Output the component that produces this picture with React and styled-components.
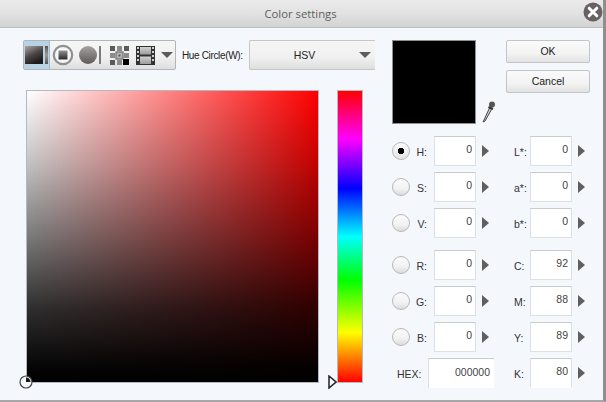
import React from 'react';
import styled, {createGlobalStyle} from 'styled-components';

const GlobalStyle = createGlobalStyle`
	html, body {
		margin: 0;
		padding: 0;
		background: #f4f7fc;
	}
`;

const hsvFields = [
	{label: 'H:', value: '0', checked: true},
	{label: 'S:', value: '0'},
	{label: 'V:', value: '0'},
];
const rgbFields = [
	{label: 'R:', value: '0'},
	{label: 'G:', value: '0'},
	{label: 'B:', value: '0'},
];
const labFields = [
	{label: 'L*:', value: '0'},
	{label: 'a*:', value: '0'},
	{label: 'b*:', value: '0'},
];
const cmyFields = [
	{label: 'C:', value: '92'},
	{label: 'M:', value: '88'},
	{label: 'Y:', value: '89'},
];

const Arrow = () => (
	<svg width='7' height='12' viewBox='0 0 7 12'>
		<path d='M0 0 L7 6 L0 12 Z' fill='#5f5f5f' />
	</svg>
);

const modeButtons = [
	{
		width: 26,
		icon: (
			<svg width='24' height='20' viewBox='0 0 24 20'>
				<defs>
					<linearGradient id='sq' x1='0' y1='0' x2='0.5' y2='1'>
						<stop offset='0' stopColor='#a8a8a8' />
						<stop offset='0.55' stopColor='#4c4745' />
						<stop offset='1' stopColor='#1d1a1a' />
					</linearGradient>
					<linearGradient id='bar' x1='0' y1='0' x2='0' y2='1'>
						<stop offset='0' stopColor='#555' />
						<stop offset='0.5' stopColor='#999' />
						<stop offset='1' stopColor='#555' />
					</linearGradient>
				</defs>
				<rect x='0' y='1' width='18' height='18' fill='url(#sq)' />
				<rect x='20' y='1' width='3' height='18' fill='url(#bar)' />
			</svg>
		),
	},
	{
		width: 26,
		icon: (
			<svg width='22' height='22' viewBox='0 0 22 22'>
				<defs>
					<linearGradient id='inner' x1='0' y1='0' x2='0' y2='1'>
						<stop offset='0' stopColor='#999' />
						<stop offset='1' stopColor='#222' />
					</linearGradient>
				</defs>
				<circle cx='11' cy='11' r='9.2' fill='#f4f4f4' stroke='#8f8f8f' strokeWidth='2.2' />
				<rect x='6' y='6' width='10' height='10' fill='url(#inner)' stroke='#fff' />
			</svg>
		),
	},
	{
		width: 27,
		icon: (
			<svg width='22' height='20' viewBox='0 0 22 20'>
				<defs>
					<linearGradient id='ball' x1='0' y1='0' x2='0' y2='1'>
						<stop offset='0' stopColor='#a5a1a1' />
						<stop offset='1' stopColor='#5e5a5a' />
					</linearGradient>
				</defs>
				<circle cx='9' cy='10' r='9' fill='url(#ball)' />
				<rect x='20' y='1' width='2' height='18' fill='#7c7c7c' />
			</svg>
		),
	},
	{
		width: 32,
		icon: (
			<svg width='19' height='19' viewBox='0 0 19 19'>
				<path d='M0 0h5v5H0zM14 0h5v5h-5zM0 14h5v5H0z' fill='#5a5a5a' />
				<path d='M7 0h5v5H7zM0 7h5v5H0zM14 7h5v5h-5zM7 14h5v5H7z' fill='#8b8b8b' />
				<rect x='6' y='6' width='7' height='7' fill='#b5b5b5' stroke='#7a7a7a' strokeWidth='1.4' />
				<rect x='8.5' y='8.5' width='2' height='2' fill='#555' />
				<rect x='13' y='13' width='6' height='6' fill='#000' />
			</svg>
		),
	},
	{
		width: 20,
		icon: (
			<svg width='19' height='19' viewBox='0 0 19 19'>
				<defs>
					<linearGradient id='frame' x1='0' y1='0' x2='0' y2='1'>
						<stop offset='0' stopColor='#d2d2d2' />
						<stop offset='1' stopColor='#9c9c9c' />
					</linearGradient>
				</defs>
				<rect x='0' y='0' width='19' height='19' fill='#333' />
				<rect x='4' y='1' width='11' height='7.5' fill='url(#frame)' />
				<rect x='4' y='10.5' width='11' height='7.5' fill='url(#frame)' />
				<path d='M1 1h2v2H1zM1 5h2v2H1zM1 9h2v2H1zM1 13h2v2H1zM16 1h2v2h-2zM16 5h2v2h-2zM16 9h2v2h-2zM16 13h2v2h-2z' fill='#cfcfcf' />
			</svg>
		),
	},
];

function ColorField({label, value, checked}) {
	return (
		<Field>
			<Radio $checked={checked} />
			<FieldLabel>{label}</FieldLabel>
			<ValueBox>{value}</ValueBox>
			<Arrow />
		</Field>
	);
}

function PlainColorField({label, value, open}) {
	return (
		<PlainField>
			<FieldLabel>{label}</FieldLabel>
			<ValueBox $open={open}>{value}</ValueBox>
			<Arrow />
		</PlainField>
	);
}

export default function App() {
	return (
		<Win>
			<GlobalStyle />
			<TitleBar>
				<Title>Color settings</Title>
				<CloseButton>
					<svg width='20' height='20' viewBox='0 0 20 20'>
						<circle cx='10' cy='10' r='9.5' fill='#6a6262' />
						<path d='M6.2 6.2 L13.8 13.8 M13.8 6.2 L6.2 13.8' stroke='#fff' strokeWidth='3' strokeLinecap='round' />
					</svg>
				</CloseButton>
			</TitleBar>
			<Body>
				<LeftColumn>
					<TopBar>
						<ModeBar>
							{modeButtons.map((b, i) => (
								<ModeButton key={i} $active={i === 0} $width={b.width}>
									{b.icon}
								</ModeButton>
							))}
							<Caret $left={6} />
						</ModeBar>
						<HueLabel>Hue Circle(W):</HueLabel>
						<HueSelect>
							<HueValue>HSV</HueValue>
							<Caret />
						</HueSelect>
					</TopBar>
					<PickerRow>
						<ColorSquare>
							<SquareMarker>
								<svg width='14' height='14' viewBox='0 0 14 14'>
									<circle cx='7' cy='7' r='6' fill='#f4f7fc' stroke='#444' strokeWidth='1.2' />
									<path d='M7 2.5 V7 H11.5 A4.5 4.5 0 0 0 7 2.5 Z' fill='#1a1a1a' />
								</svg>
							</SquareMarker>
						</ColorSquare>
						<HueStrip>
							<StripMarker>
								<svg width='9' height='14' viewBox='0 0 9 14'>
									<path d='M1 1 L8 7 L1 13 Z' fill='#f4f7fc' stroke='#222' strokeWidth='1.5' />
								</svg>
							</StripMarker>
						</HueStrip>
					</PickerRow>
				</LeftColumn>
				<RightColumn>
					<Header>
						<Swatch />
						<Dropper>
							<svg width='14' height='23' viewBox='0 0 14 23'>
								<path d='M7.5 8 L2 20 L1 22 L3 21 L9.5 9.5 Z' fill='#cfd3d8' stroke='#444' strokeWidth='1' />
								<path d='M6.5 7 L11 9' stroke='#333' strokeWidth='2' />
								<circle cx='10' cy='4.5' r='3' fill='#555' />
							</svg>
						</Dropper>
						<Buttons>
							<Button>OK</Button>
							<Button>Cancel</Button>
						</Buttons>
					</Header>
					<Fields>
						<FieldColumn>
							<FieldGroup>
								{hsvFields.map((f) => (
									<ColorField key={f.label} {...f} />
								))}
							</FieldGroup>
							<FieldGroup>
								{rgbFields.map((f) => (
									<ColorField key={f.label} {...f} />
								))}
								<HexField>
									<HexLabel>HEX:</HexLabel>
									<HexBox>000000</HexBox>
								</HexField>
							</FieldGroup>
						</FieldColumn>
						<SecondColumn>
							<FieldGroup>
								{labFields.map((f) => (
									<PlainColorField key={f.label} {...f} />
								))}
							</FieldGroup>
							<FieldGroup>
								{cmyFields.map((f) => (
									<PlainColorField key={f.label} {...f} />
								))}
								<PlainColorField label='K:' value='80' open />
							</FieldGroup>
						</SecondColumn>
					</Fields>
				</RightColumn>
			</Body>
		</Win>
	);
}

// Styled Components
const Win = styled.div`
	width: 606px;
	height: 402px;
	box-sizing: border-box;
	display: flex;
	flex-direction: column;
	background: #f4f7fc;
	border-right: 3px solid #8f8f8f;
	border-bottom: 2px solid #a8a8a8;
	font-family: 'Liberation Sans', Arial, sans-serif;
	font-size: 10.5px;
	color: #333;
	overflow: hidden;
`;

const TitleBar = styled.div`
	height: 28px;
	flex: none;
	box-sizing: border-box;
	position: relative;
	display: flex;
	align-items: center;
	justify-content: center;
	padding: 0 2px 0 0;
	background: linear-gradient(#eaeaea, #e2e2e2 50%, #d2d2d2);
	border-bottom: 1px solid #bdbdbd;
`;

const Title = styled.div`
	font-family: 'Open Sans', sans-serif;
	font-size: 11.3px;
	color: #5e5e5e;
`;

const CloseButton = styled.div`
	position: absolute;
	right: 0;
	top: 2px;
	height: 20px;
`;

const Body = styled.div`
	flex: 1;
	display: flex;
	padding: 12px 0 0 23px;
`;

const LeftColumn = styled.div`
	width: 369px;
	flex: none;
	display: flex;
	flex-direction: column;
`;

const TopBar = styled.div`
	display: flex;
	align-items: center;
	width: 352px;
	height: 30px;
`;

const ModeBar = styled.div`
	width: 153px;
	height: 30px;
	box-sizing: border-box;
	flex: none;
	display: flex;
	align-items: stretch;
	border: 1px solid #b2b5ba;
	border-radius: 2px;
	background: linear-gradient(#f6f6f6, #f0f0f0 60%, #dedede);
`;

const ModeButton = styled.div`
	width: ${(p) => p.$width}px;
	flex: none;
	display: flex;
	align-items: center;
	justify-content: center;
	background: ${(p) => (p.$active ? '#b7d3e4' : 'transparent')};
	border-right: ${(p) => (p.$active ? '1px solid #9fb9c9' : 'none')};
	box-sizing: border-box;
`;

const Caret = styled.div`
	width: 0;
	height: 0;
	align-self: center;
	margin-left: ${(p) => p.$left || 0}px;
	border-left: 6.5px solid transparent;
	border-right: 6.5px solid transparent;
	border-top: 6px solid #5c5c5c;
`;

const HueLabel = styled.div`
	flex: none;
	width: 67px;
	margin-left: 6px;
	font-size: 10px;
	letter-spacing: -0.35px;
	white-space: nowrap;
	color: #222;
`;

const HueSelect = styled.div`
	flex: 1;
	height: 30px;
	box-sizing: border-box;
	display: flex;
	align-items: center;
	padding-right: 4px;
	border: 1px solid #c4c6ca;
	border-right: none;
	border-radius: 2px 0 0 2px;
	background: linear-gradient(#f6f6f6, #f0f0f0 60%, #dedede);
`;

const HueValue = styled.div`
	flex: 1;
	text-align: center;
	font-size: 10.5px;
	color: #222;
`;

const PickerRow = styled.div`
	display: flex;
	gap: 18px;
	margin: 20px 0 0 3px;
`;

const ColorSquare = styled.div`
	width: 293px;
	height: 293px;
	box-sizing: border-box;
	position: relative;
	border: 1px solid #b4b8bf;
	background: linear-gradient(
			to top,
			#000 0%,
			rgba(0, 0, 0, 0.98) 5%,
			rgba(0, 0, 0, 0.82) 25%,
			rgba(0, 0, 0, 0.52) 50%,
			rgba(0, 0, 0, 0.24) 75%,
			rgba(0, 0, 0, 0) 100%
		),
		linear-gradient(to right, #fff, #f00);
`;

const SquareMarker = styled.div`
	position: absolute;
	left: -8px;
	bottom: -7px;
	height: 14px;
`;

const HueStrip = styled.div`
	width: 26px;
	height: 293px;
	box-sizing: border-box;
	position: relative;
	border: 1px solid #b4b8bf;
	background: linear-gradient(
		#f00 0%,
		#f0f 16.5%,
		#00f 33.5%,
		#0ff 50%,
		#0f0 65%,
		#ff0 83%,
		#f00 100%
	);
`;

const StripMarker = styled.div`
	position: absolute;
	left: -10px;
	bottom: -7px;
	height: 14px;
`;

const RightColumn = styled.div`
	width: 211px;
	flex: none;
	display: flex;
	flex-direction: column;
`;

const Header = styled.div`
	display: flex;
	align-items: flex-start;
	height: 84px;
`;

const Swatch = styled.div`
	width: 84px;
	height: 84px;
	box-sizing: border-box;
	flex: none;
	background: #000;
	border: 1px solid #8c8f94;
`;

const Dropper = styled.div`
	width: 30px;
	flex: none;
	margin-top: 60px;
	padding-left: 6px;
	box-sizing: border-box;
`;

const Buttons = styled.div`
	width: 84px;
	display: flex;
	flex-direction: column;
	gap: 7px;
`;

const Button = styled.div`
	height: 23px;
	box-sizing: border-box;
	display: flex;
	align-items: center;
	justify-content: center;
	padding-bottom: 2px;
	border: 1px solid #c2c4c8;
	border-radius: 2px;
	background: linear-gradient(#fafafa, #f3f3f3 60%, #e2e2e2);
	font-size: 10.5px;
	color: #222;
`;

const Fields = styled.div`
	display: flex;
	margin-top: 12px;
`;

const FieldColumn = styled.div`
	display: flex;
	flex-direction: column;
	gap: 12px;
	width: 122px;
`;

const SecondColumn = styled(FieldColumn)`
	width: 72px;
`;

const FieldGroup = styled.div`
	display: flex;
	flex-direction: column;
	gap: 6px;
`;

const Field = styled.div`
	display: grid;
	grid-template-columns: 18px 24px 42px 7px;
	align-items: center;
	height: 30px;
	& > svg {
		margin-left: 6px;
	}
`;

const Radio = styled.div`
	width: 18px;
	height: 18px;
	box-sizing: border-box;
	border: 1px solid #b5b8bc;
	border-radius: 50%;
	background: ${(p) =>
		p.$checked
			? 'radial-gradient(circle at 50% 50%, #000 0 3px, transparent 3.5px), linear-gradient(#fbfbfb, #e4e4e4)'
			: 'linear-gradient(#fbfbfb, #f2f2f2 60%, #dcdcdc)'};
`;

const FieldLabel = styled.div`
	text-align: right;
	padding: 2px 7px 0 0;
	color: #333;
`;

const ValueBox = styled.div`
	width: 42px;
	height: 30px;
	box-sizing: border-box;
	padding: 6px 3px 0 0;
	text-align: right;
	background: #fff;
	border: 1px solid #dcdfe3;
	border-top-color: #c9ccd0;
	border-bottom-color: ${(p) => (p.$open ? '#fff' : '#dcdfe3')};
	color: #444;
`;

const PlainField = styled.div`
	display: grid;
	grid-template-columns: 16px 42px 7px;
	align-items: center;
	height: 30px;
	white-space: nowrap;
	& > svg {
		margin-left: 6px;
	}
`;

const HexField = styled.div`
	display: flex;
	align-items: center;
	height: 30px;
	padding-left: 5px;
`;

const HexLabel = styled.div`
	width: 31px;
	flex: none;
	padding-top: 2px;
	color: #333;
`;

const HexBox = styled.div`
	width: 66px;
	height: 30px;
	box-sizing: border-box;
	padding: 7px 4px 0 0;
	text-align: right;
	background: #fff;
	border-top: 1px solid #c9ccd0;
	border-left: 1px solid #dcdfe3;
	color: #444;
`;
